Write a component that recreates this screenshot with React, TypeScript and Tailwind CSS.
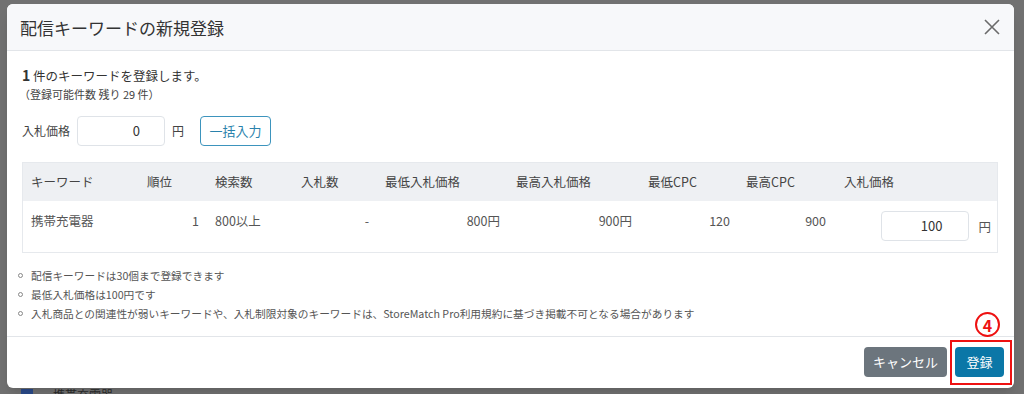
const font = { fontFamily: '"Noto Sans CJK JP", "Noto Sans", sans-serif' };

const cols = "grid grid-cols-[116px_68px_86px_84px_131px_132px_98px_98px_163px]";

const notes = [
  "配信キーワードは30個まで登録できます",
  "最低入札価格は100円です",
  "入札商品との関連性が弱いキーワードや、入札制限対象のキーワードは、StoreMatch Pro利用規約に基づき掲載不可となる場合があります",
];

export default function App() {
  return (
    <div
      className="relative w-[1024px] h-[394px] overflow-hidden bg-[#717171] pl-[7px] pt-[4px]"
      style={font}
    >
      {/* modal */}
      <div className="relative w-[1007px] h-[384px] bg-white rounded-md flex flex-col shadow-lg">
        <div className="h-[47px] shrink-0 flex items-center justify-between pl-[13px] pr-[12px] bg-[#f7f8fa] border-b border-[#e2e5e9] rounded-t-md">
          <h2 className="text-[17px] text-[#333] leading-none">配信キーワードの新規登録</h2>
          <svg width="16" height="16" viewBox="0 0 16 16" className="mr-[2px]">
            <path d="M1 1L15 15M15 1L1 15" stroke="#6b6b6b" strokeWidth="1.6" />
          </svg>
        </div>

        <div className="flex-1 pl-[15px] pr-[16px] pt-[15px]">
          <p className="text-[12.5px] leading-[18px] text-[#333]">
            <span className="font-bold text-[14px]">1</span> 件のキーワードを登録します。
          </p>
          <p className="text-[11px] leading-[16px] text-[#444] -ml-[3px] mt-[1px]">（登録可能件数 残り 29 件）</p>

          <div className="flex items-center mt-[14px] h-[30px] text-[12px] text-[#444]">
            <span>入札価格</span>
            <div className="ml-[7px] w-[88px] h-[30px] border border-[#dfe3e8] rounded-[4px] flex items-center justify-end pr-[24px] text-[#333] text-[13px]">
              0
            </div>
            <span className="ml-[7px]">円</span>
            <button className="ml-[16px] w-[71px] h-[30px] border border-[#3d94bd] rounded-[4px] text-[#2a82ac] text-[13px]">
              一括入力
            </button>
          </div>

          <div className="mt-[16px] border border-[#e6e9ed] text-[12.5px]">
            <div className={`${cols} h-[38px] items-center bg-[#eef0f3] text-[#444]`}>
              <div className="px-[8px]">キーワード</div>
              <div className="px-[8px]">順位</div>
              <div className="px-[8px]">検索数</div>
              <div className="px-[8px]">入札数</div>
              <div className="px-[8px]">最低入札価格</div>
              <div className="px-[8px]">最高入札価格</div>
              <div className="px-[8px]">最低CPC</div>
              <div className="px-[8px]">最高CPC</div>
              <div className="px-[8px]">入札価格</div>
            </div>
            <div className={`${cols} h-[51px] text-[#555] leading-[18px]`}>
              <div className="px-[8px] pt-[11px]">携帯充電器</div>
              <div className="px-[8px] pt-[11px] text-right">1</div>
              <div className="px-[8px] pt-[11px]">800以上</div>
              <div className="px-[8px] pt-[11px] text-right">-</div>
              <div className="px-[8px] pt-[11px] text-right">800円</div>
              <div className="px-[8px] pt-[11px] text-right">900円</div>
              <div className="px-[8px] pt-[11px] text-right">120</div>
              <div className="px-[8px] pt-[11px] text-right pr-[10px]">900</div>
              <div className="px-[8px] pt-[10px] flex items-start justify-end">
                <div className="w-[88px] h-[30px] border border-[#dfe3e8] rounded-[4px] flex items-center justify-end pr-[26px] text-[#333] text-[13px]">
                  100
                </div>
                <span className="ml-[9px] mt-[7px]">円</span>
              </div>
            </div>
          </div>

          <ul className="mt-[13px] -ml-[4px] text-[10.7px] text-[#555] leading-[19px]">
            {notes.map((n) => (
              <li key={n} className="flex items-center">
                <span className="w-[5px] h-[5px] rounded-full border border-[#888] mr-[8px]" />
                {n}
              </li>
            ))}
          </ul>
        </div>

        <div className="h-[52px] shrink-0 border-t border-[#e2e5e9] flex items-center justify-end gap-[8px] pr-[10px] pb-[1px]">
          <button className="w-[83px] h-[30px] rounded-[4px] bg-[#6c757d] text-white text-[13px]">キャンセル</button>
          <button className="w-[49px] h-[30px] rounded-[4px] bg-[#0b77a7] text-white text-[13px]">登録</button>
        </div>

        {/* annotation */}
        <div className="absolute left-[943px] top-[336px] w-[62px] h-[45px] border-2 border-[#ee1111]" />
        <div className="absolute left-[968px] top-[308px] w-[25px] h-[25px] rounded-full border-[2.5px] border-[#ee1111] flex items-center justify-center text-[#ee1111] font-bold text-[16px] leading-none">
          4
        </div>
      </div>

      {/* page under the overlay */}
      <div className="flex items-start gap-[20px] pl-[14px] pt-[1px] text-[12px] text-[#2a2a2a] leading-none">
        <span className="w-[12px] h-[10px] bg-[#2a4a8a]" />
        <span>携帯充電器</span>
      </div>
    </div>
  );
}
